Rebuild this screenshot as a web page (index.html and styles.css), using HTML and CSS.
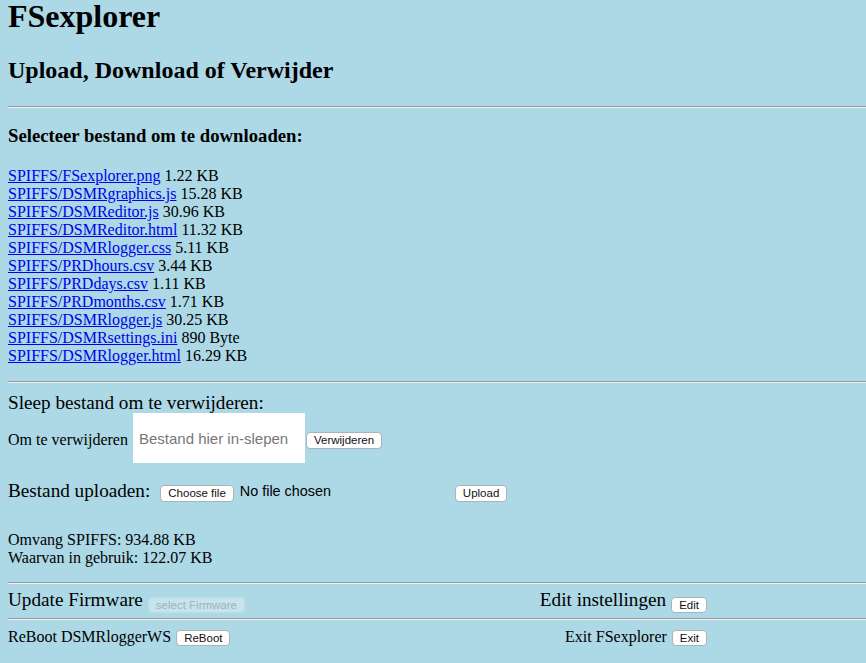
FILE: index.html
```html
<!DOCTYPE html>
<html lang="nl">
<head>
<meta charset="utf-8">
<title>FSexplorer</title>
<link rel="stylesheet" href="styles.css">
</head>
<body>
<h1 class="title">FSexplorer</h1>
<h2 class="subtitle">Upload, Download of Verwijder</h2>
<hr class="rule rule-top">
<h3 class="section-title">Selecteer bestand om te downloaden:</h3>
<div class="file-list">
  <div class="file-row"><a href="#">SPIFFS/FSexplorer.png</a> 1.22 KB</div>
  <div class="file-row"><a href="#">SPIFFS/DSMRgraphics.js</a> 15.28 KB</div>
  <div class="file-row"><a href="#">SPIFFS/DSMReditor.js</a> 30.96 KB</div>
  <div class="file-row"><a href="#">SPIFFS/DSMReditor.html</a> 11.32 KB</div>
  <div class="file-row"><a href="#">SPIFFS/DSMRlogger.css</a> 5.11 KB</div>
  <div class="file-row"><a href="#">SPIFFS/PRDhours.csv</a> 3.44 KB</div>
  <div class="file-row"><a href="#">SPIFFS/PRDdays.csv</a> 1.11 KB</div>
  <div class="file-row"><a href="#">SPIFFS/PRDmonths.csv</a> 1.71 KB</div>
  <div class="file-row"><a href="#">SPIFFS/DSMRlogger.js</a> 30.25 KB</div>
  <div class="file-row"><a href="#">SPIFFS/DSMRsettings.ini</a> 890 Byte</div>
  <div class="file-row"><a href="#">SPIFFS/DSMRlogger.html</a> 16.29 KB</div>
</div>
<hr class="rule rule-mid">
<div class="drop-title">Sleep bestand om te verwijderen:</div>
<div class="drop-row">
  <span class="drop-label">Om te verwijderen</span>
  <div class="dropzone">Bestand hier in-slepen</div>
  <button class="btn btn-delete">Verwijderen</button>
</div>
<div class="upload-row">
  <span class="upload-label">Bestand uploaden:</span>
  <button class="btn btn-choose">Choose file</button>
  <span class="file-status">No file chosen</span>
  <button class="btn btn-upload">Upload</button>
</div>
<div class="info">
  <div>Omvang SPIFFS: 934.88 KB</div>
  <div>Waarvan in gebruik: 122.07 KB</div>
</div>
<hr class="rule rule-info">
<div class="action-row action-row-first">
  <div class="action-group">
    <span class="action-text large">Update Firmware</span>
    <button class="btn btn-action" disabled>select Firmware</button>
  </div>
  <div class="action-group">
    <span class="action-text large">Edit instellingen</span>
    <button class="btn btn-action">Edit</button>
  </div>
</div>
<hr class="rule">
<div class="action-row action-row-second">
  <div class="action-group">
    <span class="action-text">ReBoot DSMRloggerWS</span>
    <button class="btn btn-action btn-small-row">ReBoot</button>
  </div>
  <div class="action-group">
    <span class="action-text">Exit FSexplorer</span>
    <button class="btn btn-action btn-small-row">Exit</button>
  </div>
</div>
</body>
</html>
```
FILE: styles.css
```css
html, body {
  margin: 0;
  padding: 0;
}
body {
  background: #add8e6;
  color: #000;
  font-family: "Liberation Serif", "Times New Roman", serif;
  font-size: 16px;
  padding-left: 8px;
  padding-top: 1px;
  min-height: 663px;
  box-sizing: border-box;
}
.title {
  margin: 0;
  font-size: 32px;
  line-height: 30px;
  font-weight: bold;
}
.subtitle {
  margin: 25px 0 0 0;
  font-size: 24px;
  line-height: 28px;
  font-weight: bold;
}
.rule {
  margin: 0;
  height: 0;
  border: 0;
  border-top: 1px solid #9a9a9a;
  border-bottom: 1px solid #eef3f5;
}
.rule-top {
  margin-top: 22px;
}
.section-title {
  margin: 17px 0 0 0;
  font-size: 18.72px;
  line-height: 22px;
  font-weight: bold;
}
.file-list {
  margin-top: 20px;
  line-height: 18px;
}
.file-row a {
  color: #0000ee;
  text-decoration: underline;
}
.rule-mid {
  margin-top: 16px;
}
.drop-title {
  margin-top: 9px;
  font-size: 19.2px;
  line-height: 21px;
}
.drop-row {
  display: flex;
  align-items: flex-start;
  height: 50px;
}
.drop-label {
  margin-top: 18px;
  line-height: 18px;
  margin-right: 5px;
}
.dropzone {
  width: 172px;
  height: 50px;
  box-sizing: border-box;
  background: #fff;
  color: #777;
  font-family: "Liberation Sans", Arial, sans-serif;
  font-size: 15px;
  padding-left: 6px;
  display: flex;
  align-items: center;
  margin-right: 1px;
}
.btn {
  font-family: "Liberation Sans", Arial, sans-serif;
  font-size: 11.5px;
  line-height: 15px;
  height: 17px;
  padding: 0 7px;
  margin: 0;
  background: #fff;
  color: #111;
  border: 1px solid #a9b4b8;
  border-radius: 4px;
  box-sizing: border-box;
  white-space: nowrap;
}
.btn-delete {
  margin-top: 19px;
}
.upload-row {
  display: flex;
  align-items: flex-start;
  margin-top: 17px;
}
.upload-label {
  font-size: 19.2px;
  line-height: 22px;
  margin-right: 10px;
}
.btn-choose,
.btn-upload {
  margin-top: 5px;
}
.file-status {
  font-family: "Liberation Sans", Arial, sans-serif;
  font-size: 14.4px;
  line-height: 17px;
  margin-top: 3px;
  margin-left: 6px;
  width: 215px;
}
.info {
  margin-top: 29px;
  line-height: 18px;
}
.rule-info {
  margin-top: 15px;
}
.action-row {
  display: flex;
  justify-content: space-between;
  padding-right: 159px;
  box-sizing: border-box;
}
.action-row-first {
  height: 34px;
  padding-top: 5px;
}
.action-row-second {
  height: 42px;
  padding-top: 8px;
}
.action-group {
  display: flex;
  align-items: flex-start;
}
.action-text {
  line-height: 18px;
  margin-right: 5px;
}
.action-text.large {
  font-size: 19.2px;
  line-height: 22px;
}
.btn-action {
  margin-top: 8px;
  height: 16px;
  line-height: 14px;
  font-size: 11.5px;
  padding: 0 7px;
}
.btn-small-row {
  margin-top: 2px;
}
.btn:disabled {
  background: rgba(255, 255, 255, 0.3);
  color: #9fb3ba;
  border-color: #c4d9e0;
}
```
